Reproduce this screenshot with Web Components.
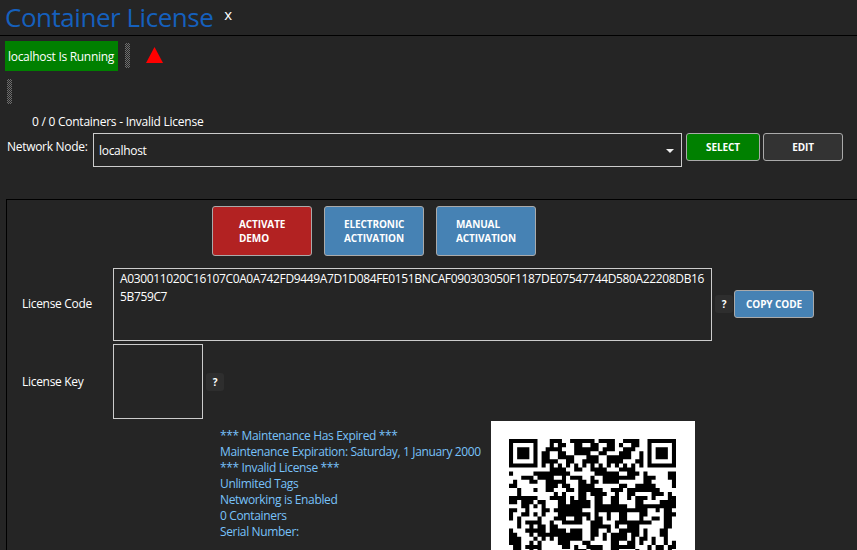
<!DOCTYPE html>
<html><head><meta charset="utf-8">
<style>
html,body{margin:0;padding:0;background:#252525;overflow:hidden}
body{font:12px/16px "Open Sans","Liberation Sans",sans-serif;color:#fff;letter-spacing:-.3px}
</style></head><body>
<cl-app>
  <cl-title>Container License</cl-title>
  <cl-status>localhost Is Running</cl-status>
  <cl-grip style="margin:8px 0 0 7px"></cl-grip>
  <cl-count>0 / 0 Containers - Invalid License</cl-count>
  <cl-node></cl-node>
  <cl-panel></cl-panel>
</cl-app>
<script>
function def(name, html, init){
  customElements.define(name, class extends HTMLElement{
    constructor(){super();this.attachShadow({mode:'open'}).innerHTML=html;}
    connectedCallback(){ if(init) init(this.shadowRoot,this); }
  });
}
def('cl-app',`<style>:host{display:flex;flex-direction:column;width:857px;height:550px;overflow:hidden}</style><slot></slot>`);
def('cl-title',`<style>
:host{display:flex;align-items:flex-start;height:35px;border-bottom:1px solid #000;padding-left:5px;box-sizing:content-box;flex:none}
.t{font-size:26px;line-height:34px;color:#1560bd;letter-spacing:-.47px}
.x{font-size:15px;line-height:18px;margin:5px 0 0 11px;letter-spacing:0}
</style><span class="t"><slot></slot></span><span class="x">x</span>`);
def('cl-grip',`<style>:host{display:block;flex:none;width:5px;height:25px;
background:repeating-conic-gradient(#6e6e6e 0 25%,transparent 0 50%) 0 0/2px 2px}</style>`);
def('cl-status',`<style>
:host{display:flex;align-items:flex-start;margin:5px 0 0 5px;flex:none}
.g{background:#008000;height:30px;width:113px;box-sizing:border-box;line-height:31px;padding-left:3px;white-space:nowrap}
cl-grip{margin:2px 0 0 7px}
svg{margin:6px 0 0 16px}
</style><span class="g"><slot></slot></span><cl-grip></cl-grip>
<svg width="17" height="16" viewBox="0 0 17 16"><path d="M8.5 0L17 16H0Z" fill="#f00"/></svg>`);
def('cl-count',`<style>:host{display:block;margin:10px 0 0 32px;line-height:16px;height:16px;flex:none;letter-spacing:-.25px}</style><slot></slot>`);
def('cl-button',`<style>
:host{display:flex;align-items:center;justify-content:center;box-sizing:border-box;flex:none;border:1px solid #aaa;border-radius:3px;
font-size:10px;font-weight:700;line-height:14px;letter-spacing:-.1px;background:var(--bg,#333);width:var(--w,80px);height:var(--h,28px);color:#fff;white-space:pre}
:host([left]){justify-content:flex-start;padding-left:var(--pl,26px);padding-bottom:1px}
</style><slot></slot>`);
def('cl-tip',`<style>:host{display:flex;align-items:center;justify-content:center;width:18px;height:18px;flex:none;background:#2e2e2e;border-radius:3px;font-size:10px;font-weight:700}</style>?`);
def('cl-node',`<style>
:host{display:flex;align-items:flex-start;margin:3px 0 0 7px;flex:none}
.l{width:86px;line-height:16px;margin-top:6px;white-space:nowrap}
.c{width:589px;height:34px;box-sizing:border-box;border:1px solid #ccc;display:flex;align-items:center;justify-content:space-between;padding:2px 7px 0 5px;margin-right:4px}
.a{width:0;height:0;border:4px solid transparent;border-top:4px solid #eee;border-bottom:0}
cl-button+cl-button{margin-left:3px}
</style><span class="l">Network Node:</span><span class="c"><span>localhost</span><i class="a"></i></span>
<cl-button style="--bg:#008000;--w:74px">SELECT</cl-button><cl-button style="--w:80px">EDIT</cl-button>`);
def('cl-qr',`<style>:host{display:block;width:204px;height:204px;background:#fff;flex:none;padding:18px;box-sizing:border-box}svg{display:block}</style>
<svg id="s" width="167" height="167" viewBox="0 0 41 41"></svg>`,(r)=>{
  const top=[
"00000000001110011111101111001111000000000",
"00000000001011001100110011010011000000000",
"00000000011110001111110111001110000000000",
"00000000110011001111001100011100100000000",
"00000000110011110001110011111100100000000",
"00000000111100110011110011110001100000000",
"00000000000000000000000000000000000000000",
"00000000001111001100111100011110000000000"];
  // deterministic blotchy fill for the data area, smoothed so blobs read like the reference
  let seed=20240;const rnd=()=>(seed=(seed*1103515245+12345)&0x7fffffff)>>>16&1;
  const raw=[];for(let y=0;y<30;y++){raw[y]=[];for(let x=0;x<43;x++)raw[y][x]=rnd();}
  const data=(x,y)=>{let n=0;for(let j=-1;j<=1;j++)for(let i=-1;i<=1;i++){const w=(i==0&&j==0)?3:(i==0||j==0)?1:0;n+=w*raw[y+1+j>=0?y+1+j:0][x+1+i>=0?x+1+i:0];}return n>=4;};
  const on=(x,y)=>{
    const f=(a,b)=>{const i=x-a,j=y-b; if(i<0||j<0||i>6||j>6)return null; return i==0||j==0||i==6||j==6||(i>1&&i<5&&j>1&&j<5);};
    let v=f(0,0); if(v!==null)return v; v=f(34,0); if(v!==null)return v;
    if(y<8&&(x<8||x>32))return false;
    if(y==6)return x%2==0;
    if(y<8)return top[y][x]=='1';
    if(x==6)return y%2==0;
    return data(x,y);
  };
  let d='';
  for(let y=0;y<28;y++)for(let x=0;x<41;x++) if(on(x,y)) d+=`M${x} ${y}h1v1h-1z`;
  const p=document.createElementNS('http://www.w3.org/2000/svg','path');p.setAttribute('d',d);p.setAttribute('fill','#000');r.getElementById('s').appendChild(p);
});
def('cl-panel',`<style>
:host{display:block;flex:none;margin:32px 0 0 6px;border-left:1px solid #000;border-top:1px solid #000;height:400px}
.acts{display:flex;gap:12px;margin:6px 0 0 205px}
.row{display:flex;align-items:center}
.lb{width:91px;padding-left:15px;box-sizing:content-box;width:91px}
.code{margin-top:12px;align-items:flex-start}
.code .lb{margin-top:28px}
.ta{width:599px;height:73px;box-sizing:border-box;border:1px solid #ccc;padding:1px 2px 2px 6px;line-height:18px;word-break:break-all;letter-spacing:-.36px}
.code cl-tip{margin:27px 1px 0 3px}
.code cl-button{margin-top:22px}
.key{margin-top:3px;align-items:flex-start}
.key .lb{margin-top:30px}
.kb{width:90px;height:75px;box-sizing:border-box;border:1px solid #ccc}
.key cl-tip{margin:29px 0 0 3px}
.bot{display:flex;align-items:flex-start;margin:2px 0 0 213px}
.info{color:#78c2fa;line-height:16px;width:271px;margin-top:7px;white-space:nowrap;letter-spacing:-.35px}
</style>
<div class="acts">
<cl-button left style="--bg:#b22222;--w:100px;--h:50px">ACTIVATE
DEMO</cl-button>
<cl-button left style="--bg:#4682b4;--w:100px;--h:50px;--pl:19px">ELECTRONIC
ACTIVATION</cl-button>
<cl-button left style="--bg:#4682b4;--w:100px;--h:50px;--pl:19px">MANUAL
ACTIVATION</cl-button>
</div>
<div class="row code"><span class="lb">License Code</span><div class="ta">A030011020C16107C0A0A742FD9449A7D1D084FE0151BNCAF090303050F1187DE07547744D580A22208DB165B759C7</div><cl-tip></cl-tip><cl-button style="--bg:#4682b4;--w:80px">COPY CODE</cl-button></div>
<div class="row key"><span class="lb">License Key</span><div class="kb"></div><cl-tip></cl-tip></div>
<div class="bot"><div class="info">*** Maintenance Has Expired ***<br>Maintenance Expiration: Saturday, 1 January 2000<br>*** Invalid License ***<br>Unlimited Tags<br>Networking is Enabled<br>0 Containers<br>Serial Number:</div><cl-qr></cl-qr></div>`);
</script>
</body></html>
